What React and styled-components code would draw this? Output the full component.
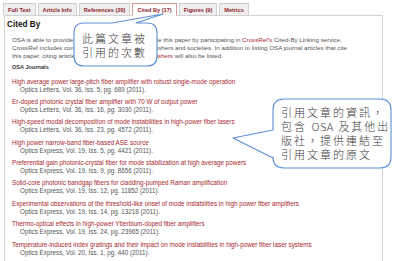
import React from "react";
import styled, { createGlobalStyle } from "styled-components";

const Global = createGlobalStyle`
  html, body { margin: 0; padding: 0; background: #fff; }
  body { width: 400px; height: 261px; overflow: hidden; font-family: "Liberation Sans", Arial, sans-serif; }
`;

const Page = styled.div`
  position: relative;
  width: 400px;
  height: 261px;
  padding: 3px 0 0 3px;
  box-sizing: border-box;
  overflow: hidden;
`;

const TabBar = styled.div`
  display: flex;
  gap: 2px;
  height: 12px;
  position: relative;
  z-index: 2;
`;

const Tab = styled.div`
  box-sizing: border-box;
  height: ${(p) => (p.$active ? "13px" : "12px")};
  padding: 0 4px;
  display: flex;
  align-items: center;
  font-size: 5.6px;
  font-weight: bold;
  color: #8e1b1f;
  background: ${(p) => (p.$active ? "#fff" : "#efefef")};
  border: 1px solid ${(p) => (p.$active ? "#d49a9a" : "#cfcfcf")};
  border-bottom: ${(p) => (p.$active ? "1px solid #fff" : "none")};
  white-space: nowrap;
`;

const Panel = styled.div`
  margin-left: 1px;
  width: 379px;
  height: 246px;
  box-sizing: border-box;
  border: 1px solid #d2d2d2;
  border-bottom: none;
  padding: 4px 0 0 2px;
  overflow: hidden;
`;

const Heading = styled.div`
  font-size: 8.2px;
  line-height: 10px;
  font-weight: bold;
  color: #111;
`;

const Intro = styled.p`
  margin: 6px 0 0 5px;
  font-size: 6.2px;
  line-height: 8px;
  color: #555;
  white-space: nowrap;
`;

const Link = styled.span`
  color: #a8262c;
`;

const SubHeading = styled.div`
  margin: 3px 0 0 5px;
  font-size: 5.6px;
  line-height: 8px;
  font-weight: bold;
  color: #333;
`;

const List = styled.div`
  margin: 6.5px 0 0 5px;
  display: flex;
  flex-direction: column;
  gap: 4.4px;
`;

const Entry = styled.div`
  display: flex;
  flex-direction: column;
`;

const Title = styled.div`
  font-size: 6.3px;
  line-height: 8px;
  color: #a8262c;
  white-space: nowrap;
`;

const Cite = styled.div`
  font-size: 6.3px;
  line-height: 8px;
  color: #555;
  padding-left: 8px;
  white-space: nowrap;
`;

const Bubble = styled.div`
  position: absolute;
  left: 0;
  top: 0;
  width: 400px;
  height: 261px;
  pointer-events: none;
  z-index: 5;
`;

const BubbleText = styled.div`
  position: absolute;
  left: ${(p) => p.$x}px;
  top: ${(p) => p.$y}px;
  font-family: "Noto Sans CJK TC", "Noto Sans CJK SC", sans-serif;
  font-size: 11px;
  font-weight: 300;
  line-height: 14px;
  letter-spacing: 2px;
  color: #3a3a3a;
  white-space: nowrap;
`;

const Latin = styled.span`
  letter-spacing: 0.5px;
  font-weight: 300;
`;

const tabs = [
  "Full Text",
  "Article Info",
  "References (20)",
  "Cited By (17)",
  "Figures (9)",
  "Metrics",
];

const entries = [
  ["High average power large-pitch fiber amplifier with robust single-mode operation", "Optics Letters, Vol. 36, Iss. 5, pg. 689 (2011)."],
  ["Er-doped photonic crystal fiber amplifier with 70 W of output power", "Optics Letters, Vol. 36, Iss. 16, pg. 3030 (2011)."],
  ["High-speed modal decomposition of mode instabilities in high-power fiber lasers", "Optics Letters, Vol. 36, Iss. 23, pg. 4572 (2011)."],
  ["High power narrow-band fiber-based ASE source", "Optics Express, Vol. 19, Iss. 5, pg. 4421 (2011)."],
  ["Preferential gain photonic-crystal fiber for mode stabilization at high average powers", "Optics Express, Vol. 19, Iss. 9, pg. 8656 (2011)."],
  ["Solid-core photonic bandgap fibers for cladding-pumped Raman amplification", "Optics Express, Vol. 19, Iss. 12, pg. 11852 (2011)."],
  ["Experimental observations of the threshold-like onset of mode instabilities in high power fiber amplifiers", "Optics Express, Vol. 19, Iss. 14, pg. 13218 (2011)."],
  ["Thermo-optical effects in high-power Ytterbium-doped fiber amplifiers", "Optics Express, Vol. 19, Iss. 24, pg. 23965 (2011)."],
  ["Temperature-induced index gratings and their impact on mode instabilities in high-power fiber laser systems", "Optics Express, Vol. 20, Iss. 1, pg. 440 (2011)."],
];

function Callouts() {
  const stroke = "#5b8fd6";
  const b1 =
    "M84 23 L112 23 L163 14 L136 23 L147 23 Q157 23 157 33 L157 56 Q157 66 147 66 L84 66 Q74 66 74 56 L74 33 Q74 23 84 23 Z";
  const b2 =
    "M284 99 L380 99 Q391 99 391 110 L391 157 Q391 168 380 168 L284 168 Q273 168 273 157 L273 158 L233 138 L273 130 L273 110 Q273 99 284 99 Z";
  return (
    <Bubble>
      <svg width="400" height="261" viewBox="0 0 400 261">
        <path d={b1} fill="#fff" stroke={stroke} strokeWidth="1.1" strokeLinejoin="round" />
        <path d={b2} fill="#fff" stroke={stroke} strokeWidth="1.1" strokeLinejoin="round" />
      </svg>
      <BubbleText $x={82} $y={31}>
        此篇文章被
        <br />
        引用的次數
      </BubbleText>
      <BubbleText $x={281} $y={105}>
        引用文章的資訊，
        <br />
        包含 <Latin>OSA</Latin> 及其他出
        <br />
        版社，提供連結至
        <br />
        引用文章的原文
      </BubbleText>
    </Bubble>
  );
}

export default function App() {
  return (
    <>
      <Global />
      <Page>
        <TabBar>
          {tabs.map((t) => (
            <Tab key={t} $active={t.startsWith("Cited")}>
              {t}
            </Tab>
          ))}
        </TabBar>
        <Panel>
          <Heading>Cited By</Heading>
          <Intro>
            OSA is able to provide readers links to articles that cite this paper by participating in{" "}
            <Link>CrossRef's</Link> Cited-By Linking service.
            <br />
            CrossRef includes content from more than 3000 publishers and societies. In addition to listing OSA journal articles that cite
            <br />
            this paper, citing articles from other participating <Link>publishers</Link> will also be listed.
          </Intro>
          <SubHeading>OSA Journals</SubHeading>
          <List>
            {entries.map(([t, c]) => (
              <Entry key={t}>
                <Title>{t}</Title>
                <Cite>{c}</Cite>
              </Entry>
            ))}
          </List>
        </Panel>
        <Callouts />
      </Page>
    </>
  );
}
